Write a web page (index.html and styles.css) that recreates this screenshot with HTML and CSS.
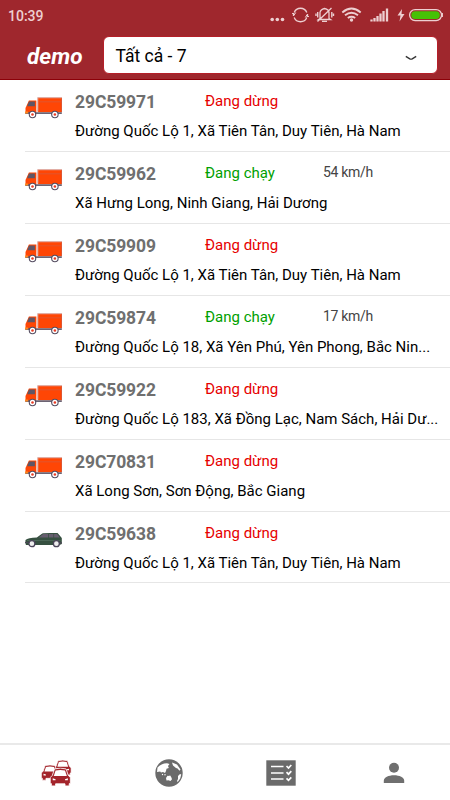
FILE: index.html
```html
<!DOCTYPE html>
<html lang="vi">
<head>
<meta charset="utf-8">
<title>demo</title>
<link rel="stylesheet" href="styles.css">
</head>
<body>
<svg class="defs" width="0" height="0">
  <symbol id="truck" viewBox="0 0 38 22">
    <path d="M13 .5h24.500v14.800H13z" fill="#ff4605"/>
    <path d="M12.500 0H37.500v1.200H13.500V14.500h-1z" fill="#d9a39c"/>
    <path d="M36.700 1h.8v14h-.8zM14 4.500h23v.6H14z" fill="#d85a3c"/>
    <path d="M4 3.500h7.500v13H.5V11z" fill="#ff4605"/>
    <path d="M4 4.300H10v5H2.200z" fill="#5f5666"/>
    <path d="M.3 15.200h37v2H.3z" fill="#6c6474"/>
    <path d="M0 14.500h3v2H0z" fill="#ff8a20"/>
    <g fill="#544c60"><circle cx="7.600" cy="17.600" r="3.800"/><circle cx="30.300" cy="17.600" r="3.800"/></g>
    <g fill="#fff"><circle cx="7.600" cy="17.600" r="2.700"/><circle cx="30.300" cy="17.600" r="2.700"/></g>
    <g fill="#e93c25"><circle cx="7.600" cy="17.600" r="1.300"/><circle cx="30.300" cy="17.600" r="1.300"/></g>
  </symbol>
  <symbol id="sedan" viewBox="0 0 38 16">
    <path d="M.5 8Q3 6 12 5.500L17.500 1.300Q19 .6 33 .9L37.300 6v6L35 13H1L.3 11z" fill="#365040"/>
    <path d="M14 5.500 18.500 1.900h5V5.500zM24.300 1.900h4.500v3.600h-4.500zM29.500 1.900h3L35.300 5.500h-5.800z" fill="#655d6e"/>
    <path d="M2 8.500h34" stroke="#567060" stroke-width=".7"/>
    <path d="M0 10.500h3M34 11h3.500" stroke="#4e4858" stroke-width="1.200"/>
    <g fill="#eee" stroke="#4c455a" stroke-width="1.300"><circle cx="7" cy="11.700" r="3"/><circle cx="31.800" cy="11.700" r="3"/></g>
  </symbol>
  <symbol id="front" viewBox="0 0 20 18">
    <path d="M4.500 1.300Q10 -.2 15.500 1.300L17.600 7.500 19.600 9.500v5.800H18.500v2.200h-4V15.500h-9v2.000h-4V15.300H.4V9.500L2.400 7.500z" fill="#a3242b" stroke="#fff" stroke-width=".8"/>
    <path d="M5.500 2.800Q10 1.700 14.500 2.800l1.700 5.200H3.800z" fill="#fff"/>
    <path d="M2.800 10.300l2.700.8v1.100H2.800zM17.200 10.300l-2.700.8v1.100h2.700z" fill="#fff"/>
  </symbol>
</svg>

<header class="top">
  <div class="status">
    <span class="clock">10:39</span>
    <svg class="status-icons" width="176" height="20" viewBox="0 0 176 20" fill="none" stroke="#edcfd1">
      <g fill="#edcfd1" stroke="none"><circle cx="2.200" cy="14.500" r="1.800"/><circle cx="7.300" cy="14.500" r="1.800"/><circle cx="12.500" cy="14.500" r="1.800"/></g>
      <path d="M24.200 7.500A6.800 6.800 0 0 1 36.800 7.500M36.800 12.500A6.800 6.800 0 0 1 24.200 12.500M23.500 11V8M37.500 9v3" stroke-width="1.300"/>
      <path d="M22 8l2.200 2 1.500-2.500M39 12l-2.200-2-1.500 2.500" stroke-width="1"/>
      <path d="M50 13.500V7.500Q50.500 4.500 54.500 3.500Q59 4.500 59 7.500V13.500L60.500 14.500H48.500zM52 16.300h5M47.500 16.500L61.500 3" stroke-width="1.300"/>
      <path d="M47.700 7v5.500M61.800 7v5.500M46 8.500v2.500M63.500 8.500v2.500" stroke-width="1.400"/>
      <path d="M72.300 7.500Q81.500-.3 90.700 7.500M75 10.300Q81.500 5 88 10.300M77.800 13Q81.500 10.500 85.200 13" stroke-width="1.900"/>
      <circle cx="81.500" cy="15" r="1.700" fill="#edcfd1" stroke="none"/>
      <path d="M101.500 14.500v2M104.500 13v3.500M107.500 11v5.500M110.500 8.500v8M113.500 6v10.500M117 3.500v13" stroke-width="2.300"/>
      <path d="M132 4l-4.500 6.500h3l-1 6 5-7.500h-3z" fill="#edcfd1" stroke="none"/>
      <rect x="139.600" y="4.600" width="32" height="11" rx="5.500" stroke-width="1.300"/>
      <path d="M172.300 8v4" stroke-width="1.300"/>
      <rect x="141.300" y="6.200" width="28.500" height="7.800" rx="3.900" fill="#46c106" stroke="none"/>
    </svg>
  </div>
  <div class="bar">
    <h1>demo</h1>
    <div class="select">
      <span>Tất cả - 7</span>
      <svg width="12" height="6" viewBox="0 0 12 6"><path d="M.8 1.300 4.800 3.800Q6 4.400 7.200 3.800L11.200 1.300" fill="none" stroke="#333" stroke-width="1.400"/></svg>
    </div>
  </div>
</header>

<main class="list">
  <article class="row"><svg class="vehicle"><use href="#truck"/></svg><div class="info"><div class="line"><b>29C59971</b><span class="stop">Đang dừng</span></div><p>Đường Quốc Lộ 1, Xã Tiên Tân, Duy Tiên, Hà Nam</p></div></article>
  <article class="row"><svg class="vehicle"><use href="#truck"/></svg><div class="info"><div class="line"><b>29C59962</b><span class="run">Đang chạy</span><span class="speed">54 km/h</span></div><p>Xã Hưng Long, Ninh Giang, Hải Dương</p></div></article>
  <article class="row"><svg class="vehicle"><use href="#truck"/></svg><div class="info"><div class="line"><b>29C59909</b><span class="stop">Đang dừng</span></div><p>Đường Quốc Lộ 1, Xã Tiên Tân, Duy Tiên, Hà Nam</p></div></article>
  <article class="row"><svg class="vehicle"><use href="#truck"/></svg><div class="info"><div class="line"><b>29C59874</b><span class="run">Đang chạy</span><span class="speed">17 km/h</span></div><p>Đường Quốc Lộ 18, Xã Yên Phú, Yên Phong, Bắc Nin...</p></div></article>
  <article class="row"><svg class="vehicle"><use href="#truck"/></svg><div class="info"><div class="line"><b>29C59922</b><span class="stop">Đang dừng</span></div><p>Đường Quốc Lộ 183, Xã Đồng Lạc, Nam Sách, Hải Dư...</p></div></article>
  <article class="row"><svg class="vehicle"><use href="#truck"/></svg><div class="info"><div class="line"><b>29C70831</b><span class="stop">Đang dừng</span></div><p>Xã Long Sơn, Sơn Động, Bắc Giang</p></div></article>
  <article class="row"><svg class="vehicle sedan"><use href="#sedan"/></svg><div class="info"><div class="line"><b>29C59638</b><span class="stop">Đang dừng</span></div><p>Đường Quốc Lộ 1, Xã Tiên Tân, Duy Tiên, Hà Nam</p></div></article>
</main>

<nav class="tabs">
  <svg width="32" height="28" viewBox="0 0 32 28">
    <use href="#front" x="14" y="0" width="17.500" height="17"/>
    <use href="#front" x="1" y="5" width="18" height="17"/>
    <use href="#front" x="9.800" y="8.500" width="21" height="19"/>
  </svg>
  <svg width="28" height="28" viewBox="0 0 28 28">
    <circle cx="14" cy="14" r="13.700" fill="#6b6b6b"/>
    <g fill="#fff">
      <path d="M2.500 8.500Q6 4.500 12 4.300l2.500.7-1.500 2 .8 2-2.300.7-.5 2.300-1 2-2-1-2 .5-.8-1-3.200.4z"/>
      <path d="M17 3.500l5 2 3.500 5-1 1.200-2-2.200-1.500-.5L18 6.500z"/>
      <path d="M11 19l1.500-2.200 1.700.3.800-.9 1.300 2 .7 2-1.500 1.800-2-.8-2 .3z"/>
      <path d="M23 17l2-2 1.200.5-1 4-2.500 3.500-.7-1 1-2z"/>
      <circle cx="7.500" cy="15.500" r=".7"/><circle cx="10" cy="15.800" r=".7"/>
    </g>
  </svg>
  <svg width="30" height="26" viewBox="0 0 30 26">
    <path d="M.3.300h29.400v25.400H.3z" fill="#6b6b6b"/>
    <path d="M5 6.500h12.500M5 13h12.500M5 19h12.500" stroke="#fff" stroke-width="1.300"/>
    <path d="M20.500 6l2 2 2.800-3M20.500 12.200l2 2 2.800-3M20.500 18.300l2 2 2.800-3" fill="none" stroke="#fff" stroke-width="1.700"/>
  </svg>
  <svg width="22" height="22" viewBox="0 0 22 22" fill="#6f6f6f">
    <circle cx="11" cy="5.800" r="5"/><path d="M.8 21v-2.200C.8 15.500 5.500 13.300 11 13.300s10.200 2.200 10.200 5.500V21z"/>
  </svg>
</nav>
</body>
</html>
```
FILE: styles.css
```css
* { box-sizing: border-box; margin: 0; }
body {
  width: 450px;
  height: 800px;
  display: flex;
  flex-direction: column;
  overflow: hidden;
  background: #fff;
  font-family: Roboto, "Noto Sans", sans-serif;
  color: #000;
}
.defs { position: absolute; }
svg { display: block; flex: none; }
.top {
  height: 80px;
  background: #9f272d;
  border-bottom: 1px solid #8c0008;
}
.status {
  height: 36px;
  padding: 5px 4px 0 8px;
  display: flex;
  justify-content: space-between;
}
.clock {
  font-size: 14px;
  font-weight: 500;
  line-height: 22px;
  color: #edcfd1;
}
.bar {
  display: flex;
  padding: 0 12px 0 27px;
}
h1 {
  width: 76px;
  font-size: 22.6px;
  font-style: italic;
  font-weight: 700;
  line-height: 41px;
  color: #fff;
}
.select {
  flex: 1;
  height: 38px;
  display: flex;
  align-items: center;
  justify-content: space-between;
  padding: 1px 20px 0 11.500px;
  border: 1px solid #b51f29;
  border-radius: 6px;
  background: #fff;
  font-size: 17.5px;
}
.select svg { margin-top: 4px; }
.list { flex: 1; }
.row {
  height: 72px;
  margin-left: 25px;
  display: flex;
  border-bottom: 1px solid #e6e6e6;
}
.row:last-child { height: 71px; }
.vehicle { width: 37.5px; height: 22px; margin: 17px 12.5px 0 0; }
.sedan { height: 16px; margin-top: 20px; }
.info { flex: 1; padding-top: 10px; }
.line {
  display: grid;
  grid-template-columns: 130px 118px 1fr;
  height: 31px;
  line-height: 22px;
  font-size: 15px;
}
.line b { font-size: 17.5px; letter-spacing: -0.1px; line-height: 24px; color: #6f6f6f; }
.stop { color: #e60000; }
.run { color: #00a000; }
.speed { font-size: 14px; letter-spacing: -0.3px; line-height: 20px; color: #444; }
p { font-size: 15px; line-height: 20px; white-space: nowrap; }
.tabs {
  height: 57px;
  border-top: 2px solid #e9e9e9;
  display: grid;
  grid-template-columns: repeat(4, 1fr);
  place-items: center;
}
```
